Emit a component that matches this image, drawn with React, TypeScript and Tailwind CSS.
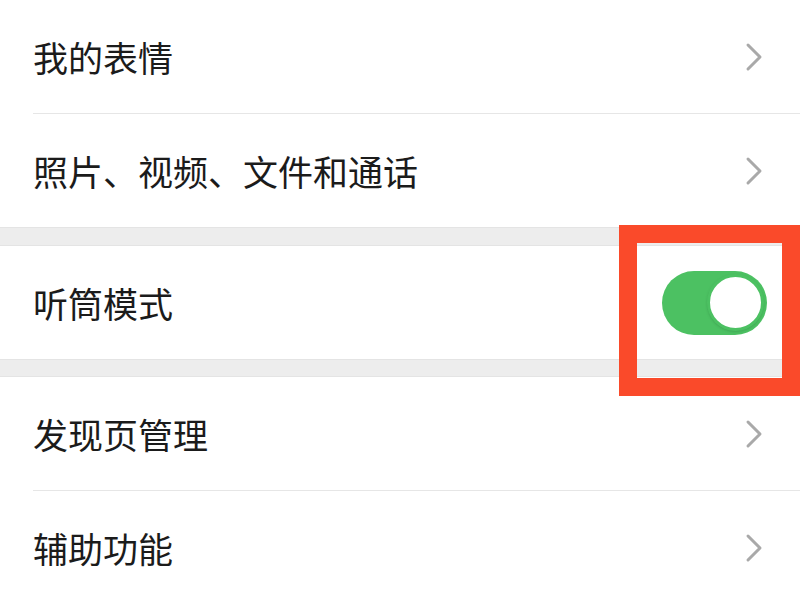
import React from 'react';

const font = { fontFamily: '"Noto Sans CJK SC", "Noto Sans", sans-serif' };

function Chevron() {
  return (
    <svg width="20" height="30" viewBox="0 0 20 30" className="shrink-0">
      <polyline points="4,3 16,15 4,27" fill="none" stroke="#a9a9a9" strokeWidth="3" strokeLinecap="round" strokeLinejoin="round" />
    </svg>
  );
}

function Toggle() {
  return (
    <div className="relative h-[64px] w-[105px] rounded-full bg-[#4cc162]">
      <div className="absolute right-[3px] top-[3.5px] h-[57px] w-[57px] rounded-full border-[3px] border-[#4cc162] bg-white shadow-sm" />
    </div>
  );
}

function Row({ label, right, divider }: { label: string; right: React.ReactNode; divider?: boolean }) {
  return (
    <div className="bg-white">
      <div className="flex h-[113px] items-center justify-between pl-[33px] pr-[36px]">
        <span className="text-[35px] leading-none text-[#1b1b1b]">{label}</span>
        {right}
      </div>
      {divider && <div className="ml-[33px] h-px bg-[#e6e6e6]" />}
    </div>
  );
}

export default function App() {
  return (
    <div className="relative h-[600px] w-[800px] overflow-hidden bg-white" style={font}>
      <Row label="我的表情" right={<Chevron />} divider />
      <Row label="照片、视频、文件和通话" right={<Chevron />} />
      <div className="h-[19px] border-y border-[#e4e4e4] bg-[#ededed]" />
      <div className="bg-white">
        <div className="flex h-[113px] items-center justify-between pl-[33px] pr-[33px]">
          <span className="text-[35px] leading-none text-[#1b1b1b]">听筒模式</span>
          <Toggle />
        </div>
      </div>
      <div className="h-[18px] border-y border-[#e4e4e4] bg-[#ededed]" />
      <Row label="发现页管理" right={<Chevron />} divider />
      <Row label="辅助功能" right={<Chevron />} />

      {/* highlight box */}
      <div className="absolute left-[619px] top-[225px] h-[171px] w-[181px] border-[18px] border-[#fa4a2a]" />
    </div>
  );
}
